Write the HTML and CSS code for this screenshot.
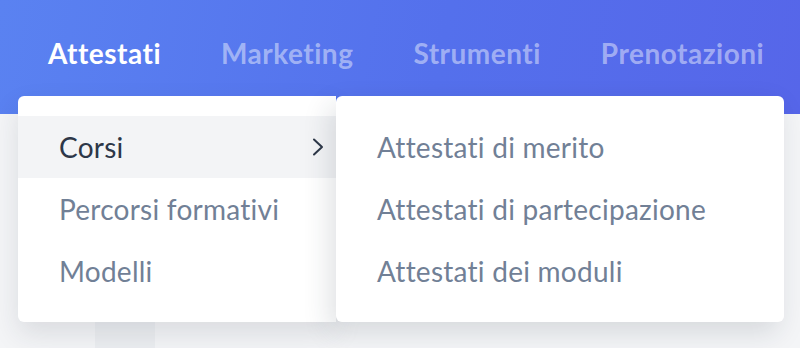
FILE: index.html
```html
<!DOCTYPE html>
<html lang="it">
<head>
  <meta charset="UTF-8" />
  <meta name="viewport" content="width=device-width, initial-scale=1.0" />
  <title>Menu attestati</title>
  <link rel="stylesheet" href="styles.css">
</head>
<body>
  <header class="topbar">
    <nav class="nav">
      <a href="#" class="nav-item active">Attestati</a>
      <a href="#" class="nav-item">Marketing</a>
      <a href="#" class="nav-item">Strumenti</a>
      <a href="#" class="nav-item">Prenotazioni</a>
    </nav>
  </header>

  <main class="content">
    <div class="placeholder"></div>
  </main>

  <div class="dropdown">
    <ul class="menu">
      <li class="menu-item open">
        <span>Corsi</span>
        <svg class="chevron" width="12" height="18" viewBox="0 0 12 18" fill="none">
          <path d="M2 1.5 L10 9 L2 16.5" stroke="#2d3748" stroke-width="2" stroke-linecap="round" stroke-linejoin="round"/>
        </svg>
      </li>
      <li class="menu-item">Percorsi formativi</li>
      <li class="menu-item">Modelli</li>
    </ul>
    <ul class="submenu">
      <li class="menu-item">Attestati di merito</li>
      <li class="menu-item">Attestati di partecipazione</li>
      <li class="menu-item">Attestati dei moduli</li>
    </ul>
  </div>
</body>
</html>
```

FILE: styles.css
```css
* {
  margin: 0;
  padding: 0;
  box-sizing: border-box;
}

body {
  font-family: Lato, 'Noto Sans', sans-serif;
  background: #f4f5f7;
  color: #2d3748;
  position: relative;
  height: 348px;
  overflow: hidden;
}

/* Top bar */
.topbar {
  height: 114px;
  background: linear-gradient(100deg, #5a82f1 0%, #5470ec 55%, #5666e9 100%);
}

.nav {
  display: flex;
  gap: 60px;
  padding: 33px 0 0 48px;
}

.nav-item {
  font-size: 28px;
  font-weight: 700;
  letter-spacing: 0.5px;
  color: rgba(255, 255, 255, 0.45);
  text-decoration: none;
  line-height: 40px;
}

.nav-item.active {
  color: #ffffff;
}

.content {
  padding: 0 18px;
}

.placeholder {
  margin: 208px 0 0 77px;
  width: 60px;
  height: 40px;
  background: #eceef1;
}

/* Dropdown */
.dropdown {
  position: absolute;
  top: 96px;
  left: 18px;
  display: flex;
}

.menu,
.submenu {
  list-style: none;
  background: #ffffff;
  height: 226px;
  padding-top: 20px;
}

.menu {
  width: 318px;
  border-radius: 6px 0 0 6px;
  box-shadow: 0 12px 28px rgba(30, 41, 59, 0.12);
}

.submenu {
  width: 448px;
  border-radius: 6px;
  box-shadow: -6px 10px 28px rgba(30, 41, 59, 0.14);
  position: relative;
}

.menu-item {
  display: flex;
  align-items: center;
  justify-content: space-between;
  height: 62px;
  padding: 0 12px 0 41px;
  font-size: 28px;
  letter-spacing: 0.25px;
  color: #718096;
}

.menu-item.open {
  background: #f3f4f6;
  color: #2d3748;
}

.chevron {
  display: block;
}
```
